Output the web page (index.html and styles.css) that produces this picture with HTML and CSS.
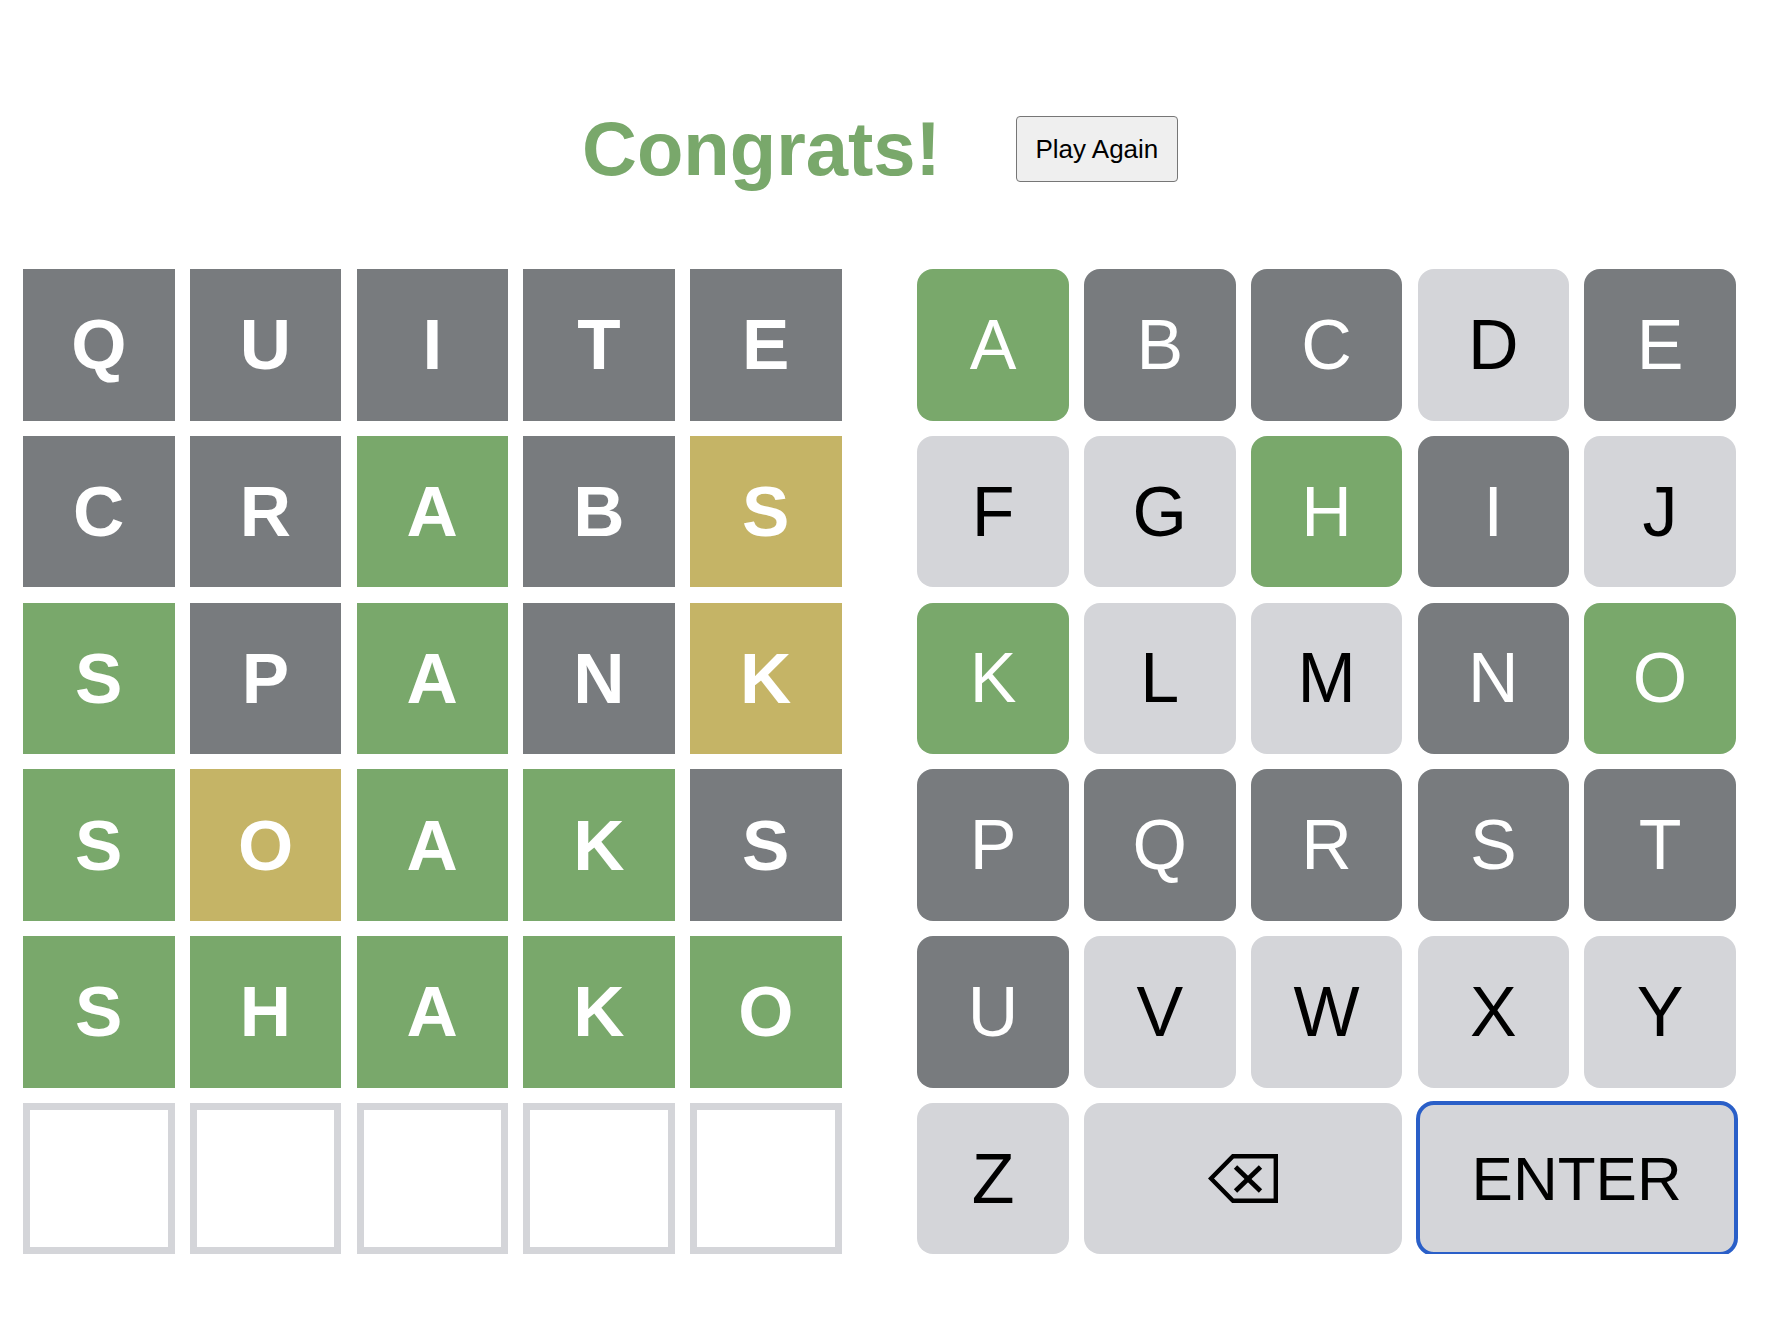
FILE: index.html
```html
<!DOCTYPE html>
<html>
<head>
<meta charset="utf-8">
<link rel="stylesheet" href="styles.css">
</head>
<body>
<div class="page">
  <header class="header">
    <h1 class="title">Congrats!</h1>
    <button class="again">Play Again</button>
  </header>
  <main class="game">
    <div class="board">
      <div class="tile gray">Q</div><div class="tile gray">U</div><div class="tile gray">I</div><div class="tile gray">T</div><div class="tile gray">E</div>
      <div class="tile gray">C</div><div class="tile gray">R</div><div class="tile green">A</div><div class="tile gray">B</div><div class="tile yellow">S</div>
      <div class="tile green">S</div><div class="tile gray">P</div><div class="tile green">A</div><div class="tile gray">N</div><div class="tile yellow">K</div>
      <div class="tile green">S</div><div class="tile yellow">O</div><div class="tile green">A</div><div class="tile green">K</div><div class="tile gray">S</div>
      <div class="tile green">S</div><div class="tile green">H</div><div class="tile green">A</div><div class="tile green">K</div><div class="tile green">O</div>
      <div class="tile empty"></div><div class="tile empty"></div><div class="tile empty"></div><div class="tile empty"></div><div class="tile empty"></div>
    </div>
    <div class="keyboard">
      <div class="key green">A</div><div class="key gray">B</div><div class="key gray">C</div><div class="key light">D</div><div class="key gray">E</div>
      <div class="key light">F</div><div class="key light">G</div><div class="key green">H</div><div class="key gray">I</div><div class="key light">J</div>
      <div class="key green">K</div><div class="key light">L</div><div class="key light">M</div><div class="key gray">N</div><div class="key green">O</div>
      <div class="key gray">P</div><div class="key gray">Q</div><div class="key gray">R</div><div class="key gray">S</div><div class="key gray">T</div>
      <div class="key gray">U</div><div class="key light">V</div><div class="key light">W</div><div class="key light">X</div><div class="key light">Y</div>
      <div class="key light">Z</div>
      <div class="key light wide">
        <svg class="bksp" width="70" height="49" viewBox="0 0 70 49">
          <polygon points="3,24.5 25,2.2 67.8,2.2 67.8,46.8 25,46.8" fill="none" stroke="#000" stroke-width="4.4" stroke-linejoin="miter"/>
          <line x1="27.5" y1="13" x2="52.5" y2="37" stroke="#000" stroke-width="4.8"/>
          <line x1="52.5" y1="13" x2="27.5" y2="37" stroke="#000" stroke-width="4.8"/>
        </svg>
      </div>
      <div class="key light wide enter">ENTER</div>
    </div>
  </main>
</div>
</body>
</html>
```
FILE: styles.css
```css
html, body {
  margin: 0;
  padding: 0;
  background: #ffffff;
}

.page {
  font-family: "Liberation Sans", Arial, sans-serif;
  padding: 115px 0 0 23px;
}

.header {
  display: flex;
  align-items: center;
  height: 68px;
  padding-left: 559px;
  gap: 75px;
}

.title {
  margin: 0;
  font-family: "Liberation Sans", Arial, sans-serif;
  font-weight: 700;
  font-size: 76px;
  line-height: 68px;
  color: #79a86b;
}

.again {
  width: 162px;
  height: 66px;
  box-sizing: border-box;
  border: 1px solid #767676;
  border-radius: 4px;
  background: #efefef;
  font-family: "Liberation Sans", Arial, sans-serif;
  font-size: 26px;
  color: #000;
  padding: 0;
}

.game {
  display: flex;
  gap: 75.8px;
  margin-top: 86px;
}

.board, .keyboard {
  display: grid;
  grid-template-columns: repeat(5, 151.5px);
  grid-auto-rows: 151.5px;
  gap: 15.25px;
}

.tile {
  display: flex;
  align-items: center;
  justify-content: center;
  font-weight: 700;
  font-size: 71px;
  color: #ffffff;
  box-sizing: border-box;
}

.key {
  display: flex;
  align-items: center;
  justify-content: center;
  font-size: 70px;
  color: #ffffff;
  border-radius: 16px;
  box-sizing: border-box;
}

.green { background: #79a86b; }
.gray { background: #787b7e; }
.yellow { background: #c5b466; }

.empty {
  background: #ffffff;
  border: 7px solid #d4d5d9;
}

.light {
  background: #d4d5d9;
  color: #000000;
}

.wide {
  grid-column: span 2;
}

.enter {
  font-size: 62px;
  outline: 4px solid #2a5fc8;
  outline-offset: -2.5px;
}

.bksp {
  display: block;
}
```
